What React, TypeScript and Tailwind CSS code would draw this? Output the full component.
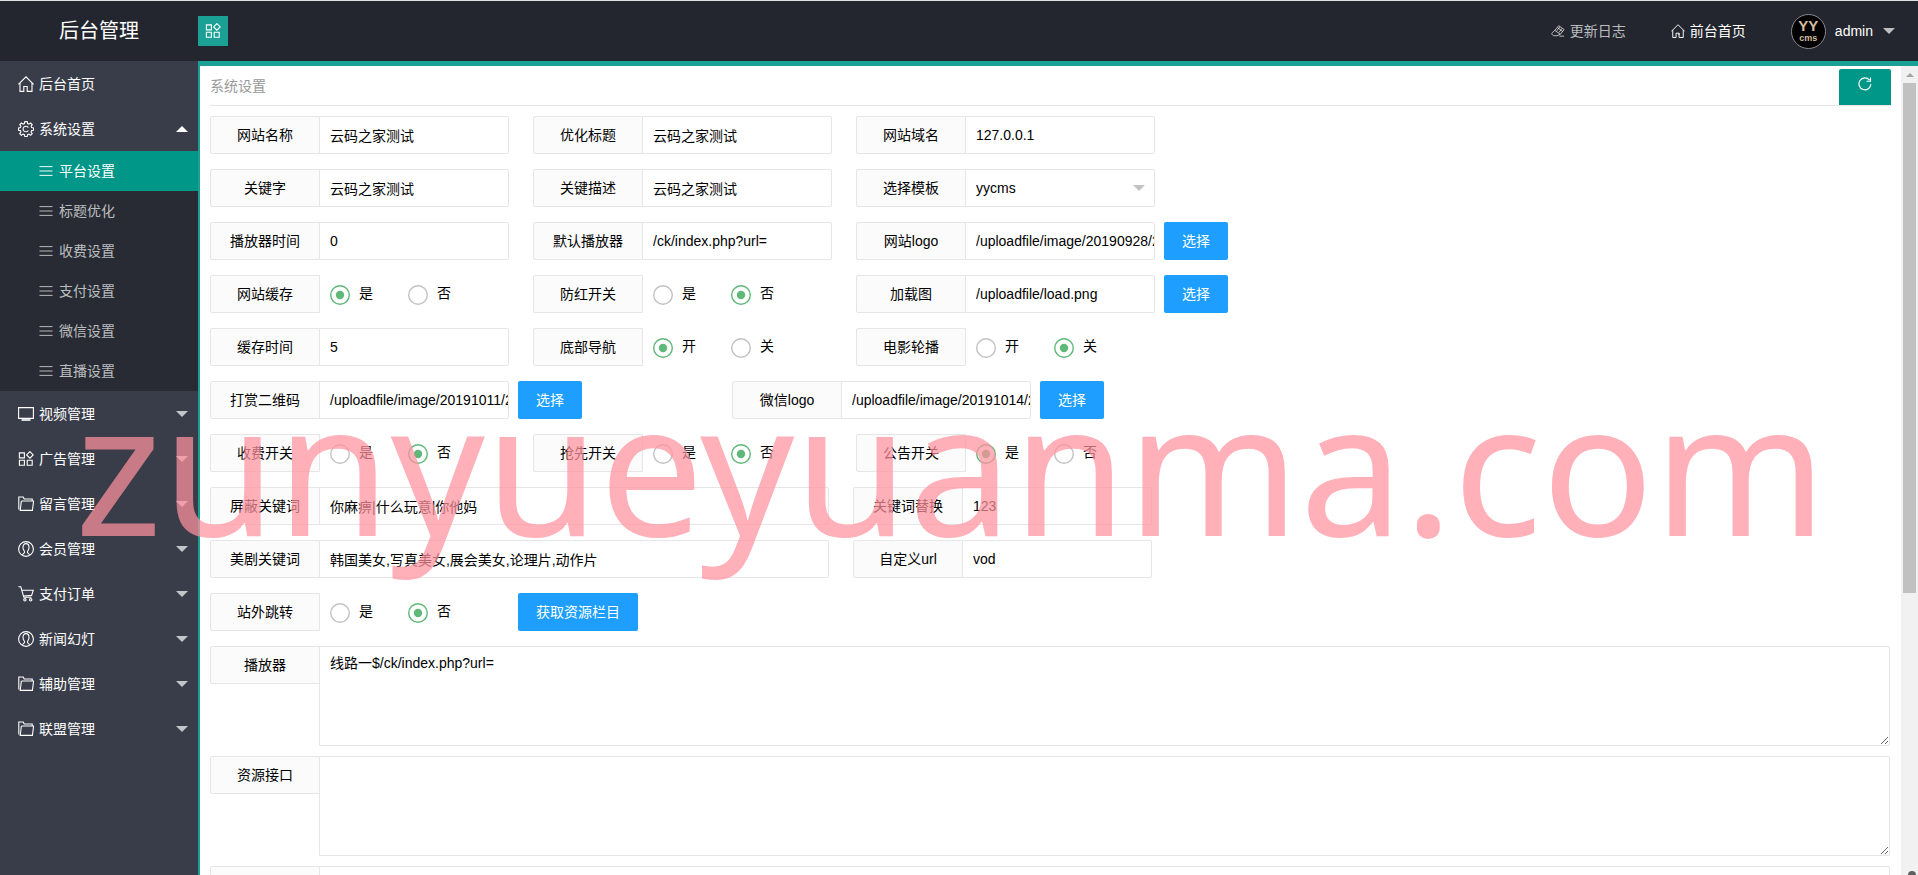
import { useState } from "react";
import type { ReactNode } from "react";
import clsx from "clsx";

interface IconProps {
  className?: string;
}

interface MenuItem {
  title: string;
  icon: React.FC<IconProps>;
  children?: string[];
  link?: boolean;
}

const Svg: React.FC<IconProps & { children: ReactNode }> = ({
  className = "w-4 h-4",
  children,
}) => (
  <svg
    viewBox="0 0 16 16"
    fill="none"
    stroke="currentColor"
    strokeWidth="1.1"
    className={clsx("shrink-0", className)}
    aria-hidden="true"
  >
    {children}
  </svg>
);

const HomeIcon: React.FC<IconProps> = (props) => (
  <Svg {...props}>
    <path d="M0.4 8.4 8 0.8l7.6 7.6M2 7v8.4h3.8v-4.9h3.4v2.2M9.2 10.5v4.9H14V7" />
  </Svg>
);

const GearIcon: React.FC<IconProps> = (props) => (
  <Svg {...props}>
    <path d="M6.8 0.6h2.4l.4 2 1.3.5 1.7-1.1 1.6 1.6-1.1 1.8.5 1.2 2 .4v2.2l-2 .4-.5 1.3 1.1 1.7-1.6 1.7-1.7-1.2-1.3.6-.4 1.8H6.8l-.4-1.8-1.3-.6-1.7 1.2-1.6-1.7 1.1-1.7-.5-1.3-1.9-.4V7l1.9-.4.5-1.2-1.1-1.8L3.4 2l1.7 1.1 1.3-.5z" />
    <path d="M10.3 6.6a2.8 2.8 0 1 0 0 2.8" />
  </Svg>
);

const AppIcon: React.FC<IconProps> = (props) => (
  <Svg {...props}>
    <path d="M1.4 1.9h5v5h-5zM1.4 9.3h5v5h-5zM9.2 9.3h5v5h-5zM11.9 0.6l3.3 3.3-3.3 3.3-3.3-3.3z" />
  </Svg>
);

const ScreenIcon: React.FC<IconProps> = (props) => (
  <Svg {...props}>
    <path d="M0.6 1.6h14.8v10.8H0.6z" />
    <path d="M3.5 14h9" strokeWidth="1.6" />
  </Svg>
);

const FolderIcon: React.FC<IconProps> = (props) => (
  <Svg {...props}>
    <path d="M0.8 13.4V1h4.4l1 2h8v2M0.8 13.4V5M3.4 5h12.2l-1.2 9.4H2.2L3.4 5" />
  </Svg>
);

const UserIcon: React.FC<IconProps> = (props) => (
  <Svg {...props}>
    <circle cx="8" cy="8" r="7.4" />
    <path d="M4.6 13.8c.2-1.4 2-1.5 2-2.8 0-1-1.6-2-1.6-4.5C5 4 6.2 2.6 8 2.6S11 4 11 6.5c0 2.5-1.6 3.5-1.6 4.5 0 1.3 1.8 1.4 2 2.8" />
  </Svg>
);

const CartIcon: React.FC<IconProps> = (props) => (
  <Svg {...props}>
    <path d="M0.4 0.8h2.4l3 10.4h7.6M4.3 4.2h11l-1.7 5.2-8.3.6" />
    <circle cx="6.9" cy="13.8" r="1.2" />
    <circle cx="12.7" cy="13.8" r="1.2" />
  </Svg>
);

const ListIcon: React.FC<IconProps> = (props) => (
  <Svg {...props}>
    <path d="M0.5 3h15M0.5 8h15M0.5 13h15" />
  </Svg>
);

const EraserIcon: React.FC<IconProps> = (props) => (
  <Svg {...props}>
    <path d="M8.8 1.9 15 6.4l-4.4 5.4-6.2-4.5zM4.4 7.3 1.6 9.8c-1 .9-.8 1.8 0 2.5l1.5 1.1h3.6l3.9-1.6M7.6 4.2l5.8 4.4M10.2 3.2l-3.6 4.6M12.6 5 9 9.8M9.5 13.9H15" />
  </Svg>
);

const RefreshIcon: React.FC<IconProps> = (props) => (
  <Svg {...props}>
    <path d="M13.2 3.6A6.8 6.8 0 1 0 14.7 8M14.3 0.6v4.2H9.8" strokeWidth="1.3" />
  </Svg>
);

const Caret: React.FC<{ up?: boolean; className?: string }> = ({ up, className }) => (
  <svg viewBox="0 0 12 6" className={clsx("w-3 h-1.5 shrink-0", className)} aria-hidden="true">
    <path d={up ? "M0 6 6 0l6 6z" : "M0 0h12L6 6z"} fill="currentColor" />
  </svg>
);

const menu: MenuItem[] = [
  { title: "后台首页", icon: HomeIcon, link: true },
  {
    title: "系统设置",
    icon: GearIcon,
    children: ["平台设置", "标题优化", "收费设置", "支付设置", "微信设置", "直播设置"],
  },
  { title: "视频管理", icon: ScreenIcon },
  { title: "广告管理", icon: AppIcon },
  { title: "留言管理", icon: FolderIcon },
  { title: "会员管理", icon: UserIcon },
  { title: "支付订单", icon: CartIcon },
  { title: "新闻幻灯", icon: UserIcon },
  { title: "辅助管理", icon: FolderIcon },
  { title: "联盟管理", icon: FolderIcon },
];

const Header = () => (
  <header className="flex h-[61px] shrink-0 items-center border-t border-[#dce1e3] bg-[#23262e] text-white">
    <div className="w-[198px] shrink-0 text-center text-xl">后台管理</div>
    <button
      type="button"
      aria-label="收起菜单"
      className="flex h-[30px] w-[30px] items-center justify-center bg-[#1aa094]"
    >
      <AppIcon />
    </button>
    <nav className="ml-auto flex items-center pr-[23px]">
      <a href="#log" className="flex items-center gap-[5px] text-white/70">
        <EraserIcon className="h-[14px] w-[14px]" />
        更新日志
      </a>
      <a href="#front" className="ml-[45px] flex items-center gap-[5px]">
        <HomeIcon className="h-[14px] w-[14px]" />
        前台首页
      </a>
      <button type="button" className="ml-[45px] flex items-center">
        <span className="flex h-[35px] w-[35px] flex-col items-center justify-center rounded-full border border-[#8d8890] bg-black font-bold text-[#d3bd9c]">
          <span className="text-[15px] leading-[14px]">YY</span>
          <span className="text-[9px] leading-[10px]">cms</span>
        </span>
        <span className="ml-[9px]">admin</span>
        <Caret className="ml-2.5 text-white/70" />
      </button>
    </nav>
  </header>
);

const Sidebar = () => {
  const [open, setOpen] = useState("系统设置");

  return (
    <nav className="w-[198px] shrink-0 overflow-hidden bg-[#393d49] text-white">
      <ul>
        {menu.map(({ title, icon: Icon, children, link }) => (
          <li key={title}>
            {link ? (
              <a href="#home" className="flex h-[45px] items-center gap-[5px] pl-[18px]">
                <Icon />
                {title}
              </a>
            ) : (
              <button
                type="button"
                onClick={() => setOpen(open === title ? "" : title)}
                className="flex h-[45px] w-full items-center gap-[5px] pr-2.5 pl-[18px]"
              >
                <Icon />
                {title}
                <Caret
                  up={open === title}
                  className={clsx("ml-auto", open !== title && "text-white/70")}
                />
              </button>
            )}
            {children && open === title && (
              <ul className="bg-[#282b33]">
                {children.map((child, i) => (
                  <li key={child}>
                    <a
                      href="#setting"
                      className={clsx(
                        "flex h-10 items-center gap-1.5 pl-[39px]",
                        i === 0 ? "bg-[#009688]" : "text-white/70"
                      )}
                    >
                      <ListIcon className="h-[14px] w-[14px]" />
                      {child}
                    </a>
                  </li>
                ))}
              </ul>
            )}
          </li>
        ))}
      </ul>
    </nav>
  );
};

const labelClass =
  "flex h-[38px] w-[110px] shrink-0 items-center justify-center rounded-l-xs border border-[#e6e6e6] bg-[#fbfbfb]";
const controlClass = "-ml-px rounded-r-xs border border-[#e6e6e6] bg-white pl-2.5 outline-none";

interface FieldProps {
  label: string;
  name: string;
  value: string;
  wide?: boolean;
  picker?: boolean;
}

const BlueButton: React.FC<{ children: ReactNode }> = ({ children }) => (
  <button
    type="button"
    className="ml-[9px] h-[38px] shrink-0 rounded-xs bg-[#1e9fff] px-[18px] text-white"
  >
    {children}
  </button>
);

const Field: React.FC<FieldProps> = ({ label, name, value, wide, picker }) => (
  <div className="flex">
    <label htmlFor={name} className={labelClass}>
      {label}
    </label>
    <input
      id={name}
      defaultValue={value}
      className={clsx(controlClass, "h-[38px]", wide ? "w-[510px]" : "w-[190px]")}
    />
    {picker && <BlueButton>选择</BlueButton>}
  </div>
);

const SelectField: React.FC<{ label: string; name: string; options: string[] }> = ({
  label,
  name,
  options,
}) => (
  <div className="flex">
    <label htmlFor={name} className={labelClass}>
      {label}
    </label>
    <div className="relative">
      <select id={name} className={clsx(controlClass, "h-[38px] w-[190px] appearance-none")}>
        {options.map((option) => (
          <option key={option}>{option}</option>
        ))}
      </select>
      <Caret className="pointer-events-none absolute top-4 right-2.5 text-[#c2c2c2]" />
    </div>
  </div>
);

interface RadioFieldProps {
  label: string;
  name: string;
  options?: string[];
  checked: number;
}

const RadioField: React.FC<RadioFieldProps> = ({
  label,
  name,
  options = ["是", "否"],
  checked,
}) => (
  <fieldset className="flex" aria-label={label}>
    <span className={labelClass}>{label}</span>
    <div className="-ml-px flex w-[190px] items-center gap-[35px] pl-[11px]">
      {options.map((option, i) => (
        <label key={option} className="relative flex cursor-pointer gap-[9px]">
          <input
            type="radio"
            name={name}
            defaultChecked={i === checked}
            className="peer sr-only"
          />
          <svg
            viewBox="0 0 20 20"
            className="mt-0.5 h-5 w-5 text-[#c2c2c2] peer-checked:text-[#5fb878] peer-checked:[&>.dot]:opacity-100"
            aria-hidden="true"
          >
            <circle cx="10" cy="10" r="9.3" fill="none" stroke="currentColor" strokeWidth="1.4" />
            <circle cx="10" cy="10" r="4.2" fill="currentColor" className="dot opacity-0" />
          </svg>
          {option}
        </label>
      ))}
    </div>
  </fieldset>
);

const TextareaField: React.FC<FieldProps> = ({ label, name, value }) => (
  <div className="mb-2.5 flex items-start">
    <label htmlFor={name} className={labelClass}>
      {label}
    </label>
    <textarea
      id={name}
      defaultValue={value}
      className={clsx(controlClass, "mr-px block h-[100px] min-w-0 flex-1 resize py-1.5")}
    />
  </div>
);

const Row: React.FC<{ children: ReactNode; spread?: boolean }> = ({ children, spread }) => (
  <div className={clsx("mb-[15px] flex", spread ? "gap-[150px]" : "gap-6")}>{children}</div>
);

const SettingsForm = () => (
  <form className="pt-2.5">
    <Row>
      <Field label="网站名称" name="name" value="云码之家测试" />
      <Field label="优化标题" name="title" value="云码之家测试" />
      <Field label="网站域名" name="domain" value="127.0.0.1" />
    </Row>
    <Row>
      <Field label="关键字" name="keywords" value="云码之家测试" />
      <Field label="关键描述" name="description" value="云码之家测试" />
      <SelectField label="选择模板" name="template" options={["yycms"]} />
    </Row>
    <Row>
      <Field label="播放器时间" name="playtime" value="0" />
      <Field label="默认播放器" name="player" value="/ck/index.php?url=" />
      <Field label="网站logo" name="logo" value="/uploadfile/image/20190928/20190928" picker />
    </Row>
    <Row>
      <RadioField label="网站缓存" name="cache" checked={0} />
      <RadioField label="防红开关" name="guard" checked={1} />
      <Field label="加载图" name="loading" value="/uploadfile/load.png" picker />
    </Row>
    <Row>
      <Field label="缓存时间" name="cachetime" value="5" />
      <RadioField label="底部导航" name="footnav" options={["开", "关"]} checked={0} />
      <RadioField label="电影轮播" name="carousel" options={["开", "关"]} checked={1} />
    </Row>
    <Row spread>
      <Field label="打赏二维码" name="reward" value="/uploadfile/image/20191011/20191011" picker />
      <Field label="微信logo" name="wxlogo" value="/uploadfile/image/20191014/20191014" picker />
    </Row>
    <Row>
      <RadioField label="收费开关" name="charge" checked={1} />
      <RadioField label="抢先开关" name="early" checked={1} />
      <RadioField label="公告开关" name="notice" checked={0} />
    </Row>
    <Row>
      <Field label="屏蔽关键词" name="block" value="你麻痹|什么玩意|你他妈" wide />
      <Field label="关键词替换" name="replace" value="123" />
    </Row>
    <Row>
      <Field
        label="美剧关键词"
        name="series"
        value="韩国美女,写真美女,展会美女,论理片,动作片"
        wide
      />
      <Field label="自定义url" name="url" value="vod" />
    </Row>
    <div className="mb-[15px] flex">
      <RadioField label="站外跳转" name="jump" checked={1} />
      <BlueButton>获取资源栏目</BlueButton>
    </div>
    <TextareaField label="播放器" name="players" value="线路一$/ck/index.php?url=" />
    <TextareaField label="资源接口" name="api" value="" />
    <TextareaField label="" name="extra" value="" />
  </form>
);

const Scrollbar = () => (
  <div className="flex w-[17px] shrink-0 flex-col items-center bg-[#f1f1f1]" aria-hidden="true">
    <div className="flex h-[17px] shrink-0 items-center">
      <svg viewBox="0 0 8 4" className="h-1 w-2">
        <path d="M0 4 4 0l4 4z" fill="#a3a3a3" />
      </svg>
    </div>
    <div className="h-[63%] w-[13px] bg-[#c1c1c1]" />
  </div>
);

const App = () => (
  <div className="relative flex h-screen flex-col overflow-hidden bg-white font-['Liberation_Sans','Noto_Sans_CJK_SC',sans-serif] text-sm text-black">
    <Header />
    <div className="flex min-h-0 flex-1">
      <Sidebar />
      <div className="flex min-w-0 flex-1 border-t-[5px] border-l-2 border-[#1aa094]">
        <main className="min-w-0 flex-1 overflow-y-auto px-2.5 [scrollbar-width:none]">
          <div className="flex h-10 items-end justify-between border-b border-[#e6e6e6]">
            <h1 className="self-center text-[#999]">系统设置</h1>
            <button
              type="button"
              aria-label="刷新"
              className="flex h-9 w-[52px] justify-center rounded-t-xs bg-[#009688] pt-2 text-white"
            >
              <RefreshIcon className="h-[14px] w-[14px]" />
            </button>
          </div>
          <SettingsForm />
        </main>
        <Scrollbar />
      </div>
    </div>
    <div className="pointer-events-none absolute top-[342px] left-[75px] font-['Noto_Sans',sans-serif] text-[185px] leading-[245px] whitespace-nowrap text-[#ff929e]/72">
      zunyueyuanma.com
    </div>
    <div className="pointer-events-none absolute right-0.5 -bottom-1 h-2 w-2 rounded-full bg-[#606060]" />
  </div>
);

export default App;
